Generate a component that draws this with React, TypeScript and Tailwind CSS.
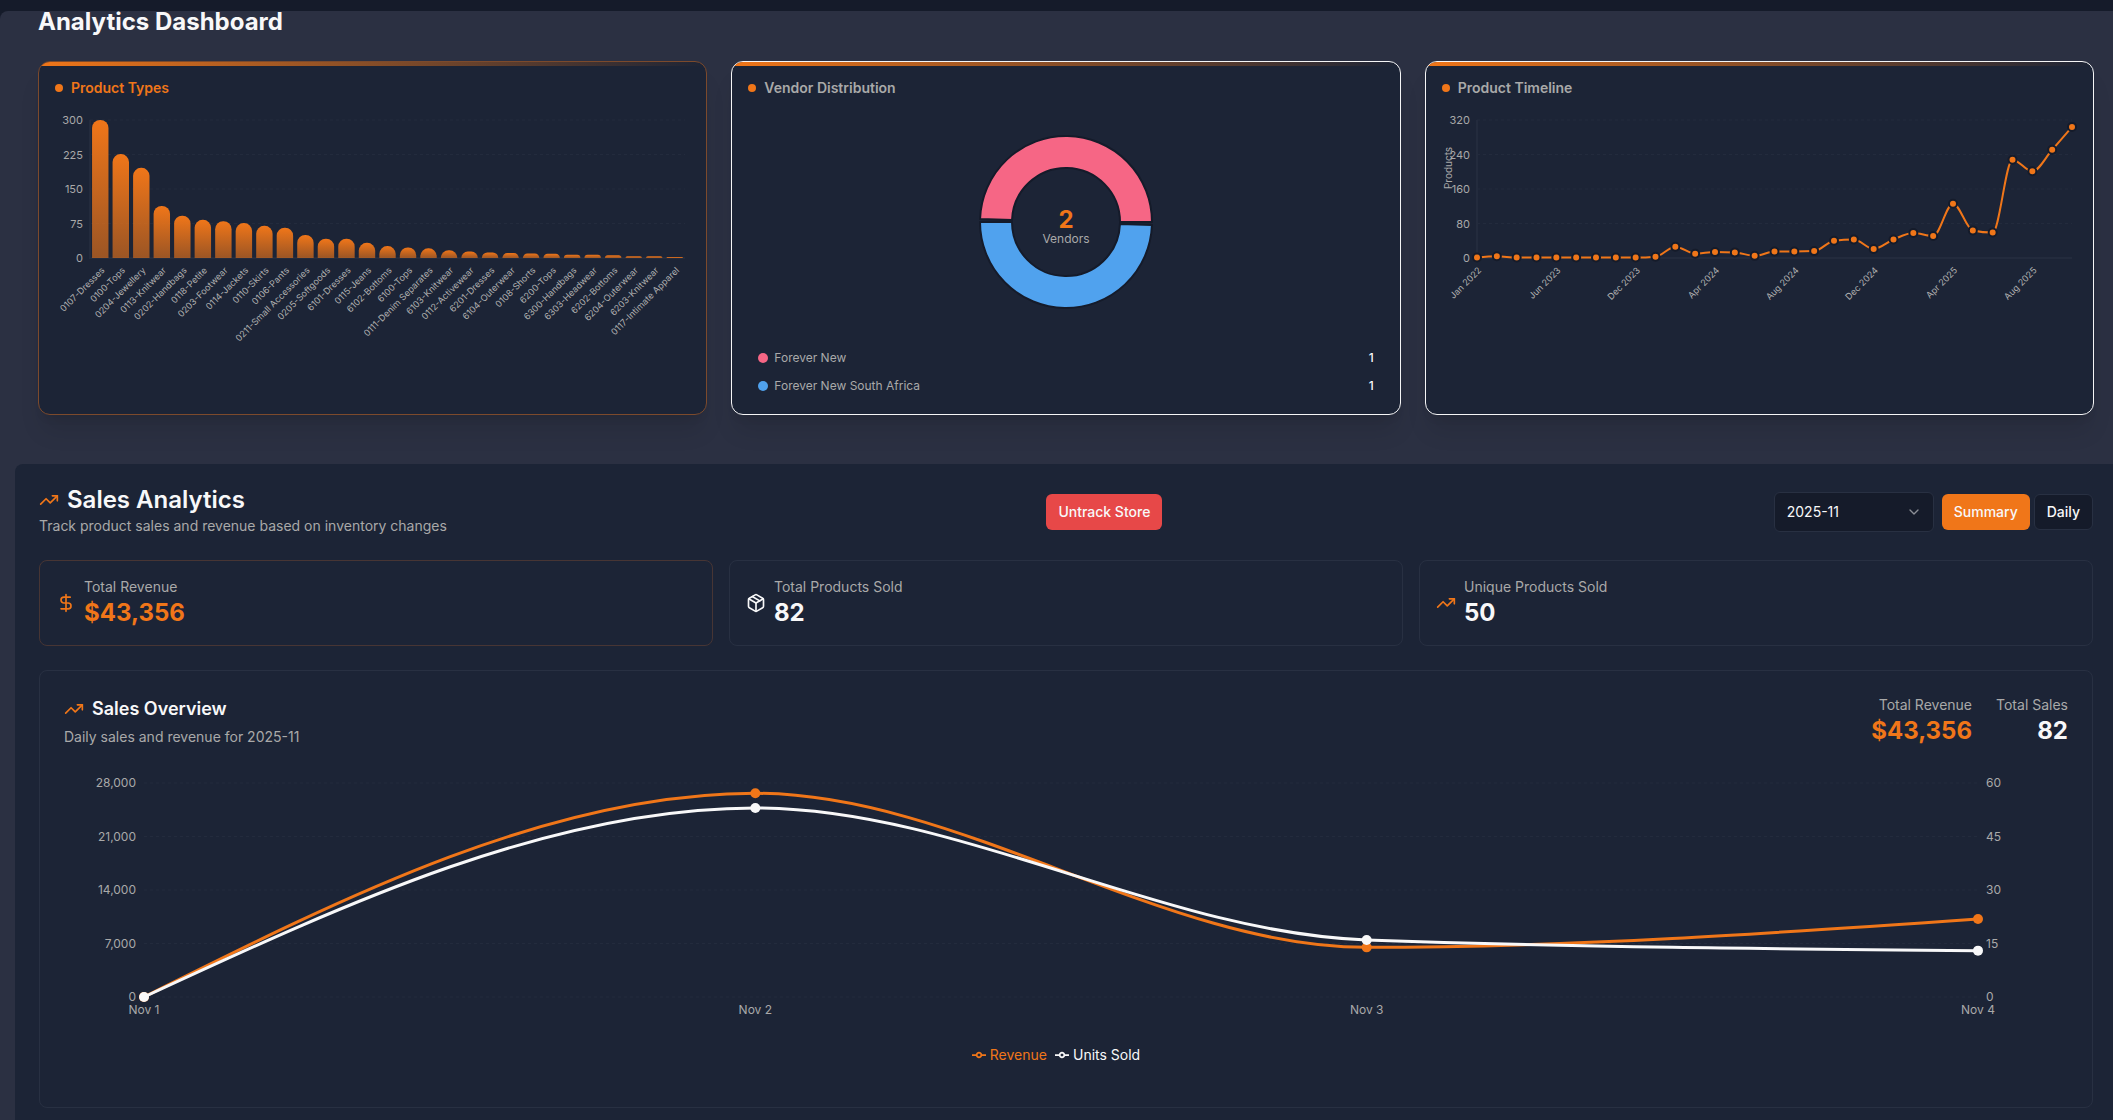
import { useLayoutEffect, useRef, useState } from "react";
import type { ReactNode } from "react";
import { ChevronDown, DollarSign, Package, TrendingUp } from "lucide-react";

type Point = { x: number; y: number };

const productTypes = [
  { name: "0107-Dresses", count: 300 },
  { name: "0100-Tops", count: 226 },
  { name: "0204-Jewellery", count: 196 },
  { name: "0113-Knitwear", count: 113 },
  { name: "0202-Handbags", count: 92 },
  { name: "0118-Petite", count: 83 },
  { name: "0203-Footwear", count: 80 },
  { name: "0114-Jackets", count: 76 },
  { name: "0110-Skirts", count: 70 },
  { name: "0106-Pants", count: 66 },
  { name: "0211-Small Accessories", count: 50 },
  { name: "0205-Softgoods", count: 42 },
  { name: "6101-Dresses", count: 42 },
  { name: "0115-Jeans", count: 33 },
  { name: "6102-Bottoms", count: 26 },
  { name: "6100-Tops", count: 23 },
  { name: "0111-Denim Separates", count: 21 },
  { name: "6103-Knitwear", count: 17 },
  { name: "0112-Activewear", count: 14 },
  { name: "6201-Dresses", count: 12 },
  { name: "6104-Outerwear", count: 11 },
  { name: "0108-Shorts", count: 10 },
  { name: "6200-Tops", count: 9 },
  { name: "6300-Handbags", count: 7 },
  { name: "6303-Headwear", count: 7 },
  { name: "6202-Bottoms", count: 6 },
  { name: "6204-Outerwear", count: 4 },
  { name: "6203-Knitwear", count: 4 },
  { name: "0117-Intimate Apparel", count: 2 },
];

const vendors = [
  { name: "Forever New", count: 1, dot: "bg-[#f66685]" },
  { name: "Forever New South Africa", count: 1, dot: "bg-[#50a2ee]" },
];

const timeline = [
  1, 4, 1, 1, 1, 1, 1, 1, 1, 3, 26, 10, 14, 13, 5, 15, 15, 16, 40, 43, 21, 43,
  58, 51, 126, 64, 59, 228, 201, 251, 304,
];

const timelineLabels = [
  "Jan 2022",
  "Jun 2023",
  "Dec 2023",
  "Apr 2024",
  "Aug 2024",
  "Dec 2024",
  "Apr 2025",
  "Aug 2025",
];

const dailySales = [
  { day: "Nov 1", revenue: 0, units: 0 },
  { day: "Nov 2", revenue: 26655, units: 53 },
  { day: "Nov 3", revenue: 6495, units: 16 },
  { day: "Nov 4", revenue: 10206, units: 13 },
];

const useWidth = () => {
  const ref = useRef<HTMLDivElement>(null);
  const [width, setWidth] = useState(0);

  useLayoutEffect(() => {
    const el = ref.current;
    if (!el) return;
    const measure = () => setWidth(el.clientWidth);
    measure();
    const observer = new ResizeObserver(measure);
    observer.observe(el);
    return () => observer.disconnect();
  }, []);

  return { ref, width };
};

// Monotone cubic interpolation, same maths as d3's curveMonotoneX
const monotonePath = (pts: Point[]) => {
  const n = pts.length;
  const slopes: number[] = [];
  for (let i = 0; i < n - 1; i++) {
    slopes.push((pts[i + 1].y - pts[i].y) / (pts[i + 1].x - pts[i].x));
  }
  const tangents: number[] = new Array(n).fill(0);
  for (let i = 1; i < n - 1; i++) {
    const a = slopes[i - 1];
    const b = slopes[i];
    tangents[i] =
      (Math.sign(a) + Math.sign(b)) *
      Math.min(Math.abs(a), Math.abs(b), 0.25 * Math.abs(a + b));
  }
  tangents[0] = (3 * slopes[0] - tangents[1]) / 2;
  tangents[n - 1] = (3 * slopes[n - 2] - tangents[n - 2]) / 2;

  let d = `M${pts[0].x},${pts[0].y}`;
  for (let i = 0; i < n - 1; i++) {
    const p = pts[i];
    const q = pts[i + 1];
    const dx = (q.x - p.x) / 3;
    d += `C${p.x + dx},${p.y + dx * tangents[i]},${q.x - dx},${q.y - dx * tangents[i + 1]},${q.x},${q.y}`;
  }
  return d;
};

const barPath = (x: number, y: number, w: number, h: number) => {
  const r = Math.min(8, w / 2, h);
  return `M${x},${y + h}V${y + r}A${r},${r},0,0,1,${x + r},${y}H${x + w - r}A${r},${r},0,0,1,${x + w},${y + r}V${y + h}Z`;
};

const slicePath = (cx: number, cy: number, from: number, to: number) => {
  const outer = 86;
  const inner = 54;
  const at = (r: number, deg: number) => {
    const rad = (deg * Math.PI) / 180;
    return `${cx + r * Math.cos(rad)},${cy - r * Math.sin(rad)}`;
  };
  return `M${at(outer, from)}A${outer},${outer},0,0,0,${at(outer, to)}L${at(inner, to)}A${inner},${inner},0,0,1,${at(inner, from)}Z`;
};

const plot = { left: 35, right: 5, top: 10, height: 138 };

const SmallGrid = ({ width, ticks }: { width: number; ticks: number[] }) => {
  const max = ticks[ticks.length - 1];
  return (
    <>
      {ticks.map((tick) => {
        const y = plot.top + plot.height * (1 - tick / max);
        return (
          <g key={tick}>
            <line
              x1={plot.left}
              x2={width - plot.right}
              y1={y}
              y2={y}
              stroke="#232b3d"
              strokeDasharray="3 3"
            />
            <text
              x={plot.left - 7}
              y={y + 4}
              textAnchor="end"
              className="fill-[#a9a9a9] text-[11px]"
            >
              {tick}
            </text>
          </g>
        );
      })}
      <path
        d={`M${plot.left},${plot.top}V${plot.top + plot.height}H${width - plot.right}`}
        fill="none"
        stroke="#232b3d"
        strokeWidth="2"
      />
    </>
  );
};

const SlantedLabel = ({ x, text }: { x: number; text: string }) => {
  const y = plot.top + plot.height + 8;
  return (
    <text
      x={x}
      y={y}
      dy="7"
      textAnchor="end"
      transform={`rotate(-45 ${x} ${y})`}
      className="fill-[#b0b0b0] text-[9px]"
    >
      {text}
    </text>
  );
};

const ProductTypesChart = () => {
  const { ref, width } = useWidth();
  const step = (width - plot.left - plot.right) / productTypes.length;
  const base = plot.top + plot.height;

  return (
    <div ref={ref} className="h-72">
      {width > 0 && (
        <svg width={width} height="288" className="block">
          <defs>
            <linearGradient id="barFill" x1="0" y1="0" x2="0" y2="1">
              <stop offset="0%" stopColor="#f07619" />
              <stop offset="100%" stopColor="#f07619" stopOpacity="0.6" />
            </linearGradient>
          </defs>
          <SmallGrid width={width} ticks={[0, 75, 150, 225, 300]} />
          {productTypes.map((item, i) => {
            const h = (item.count / 300) * plot.height;
            const x = plot.left + i * step;
            return (
              <g key={item.name}>
                <path
                  d={barPath(x + step * 0.1, base - h, step * 0.8, h)}
                  fill="url(#barFill)"
                />
                <SlantedLabel x={x + step / 2} text={item.name} />
              </g>
            );
          })}
        </svg>
      )}
    </div>
  );
};

const VendorChart = () => (
  <>
    <div className="flex h-56 justify-center">
      <svg width="200" height="224">
        <path
          d={slicePath(100, 112, 0, 178)}
          fill="#f66685"
          stroke="#151b2a"
          strokeWidth="2"
        />
        <path
          d={slicePath(100, 112, 180, 358)}
          fill="#50a2ee"
          stroke="#151b2a"
          strokeWidth="2"
        />
        <text
          x="100"
          y="118"
          textAnchor="middle"
          className="fill-[#f07619] text-2xl font-bold"
        >
          2
        </text>
        <text
          x="100"
          y="133"
          textAnchor="middle"
          className="fill-[#a9a9a9] text-xs"
        >
          Vendors
        </text>
      </svg>
    </div>
    <ul className="mt-4 flex flex-col gap-3 px-2.5">
      {vendors.map((vendor) => (
        <li key={vendor.name} className="flex items-center gap-1.5 text-xs">
          <span className={`size-2.5 rounded-full ${vendor.dot}`} />
          <span className="text-[#a9a9a9]">{vendor.name}</span>
          <span className="ml-auto font-medium">{vendor.count}</span>
        </li>
      ))}
    </ul>
  </>
);

const TimelineChart = () => {
  const { ref, width } = useWidth();
  const step = (width - plot.left - plot.right) / (timeline.length - 1);
  const points = timeline.map((value, i) => ({
    x: plot.left + i * step,
    y: plot.top + plot.height * (1 - value / 320),
  }));

  return (
    <div ref={ref} className="h-72">
      {width > 0 && (
        <svg width={width} height="288" className="block">
          <SmallGrid width={width} ticks={[0, 80, 160, 240, 320]} />
          <text
            x="10"
            y="58"
            textAnchor="middle"
            transform="rotate(-90 10 58)"
            className="fill-[#a9a9a9] text-[10px]"
          >
            Products
          </text>
          <path
            d={monotonePath(points)}
            fill="none"
            stroke="#f07619"
            strokeWidth="2"
          />
          {points.map((p, i) => (
            <circle
              key={i}
              cx={p.x}
              cy={p.y}
              r="4"
              fill="#f07619"
              stroke="#151b2a"
              strokeWidth="2"
            />
          ))}
          {timelineLabels.map((label, i) => (
            <SlantedLabel key={label} x={points[i * 4].x} text={label} />
          ))}
        </svg>
      )}
    </div>
  );
};

const ChartCard = (props: {
  title: string;
  highlighted?: boolean;
  children: ReactNode;
}) => {
  const { title, highlighted, children } = props;

  return (
    <section
      className={`relative overflow-hidden rounded-xl border bg-[#1c2436] p-4 shadow-xl ${
        highlighted ? "border-[#7c4a2c]" : "border-[#f5f5f6]"
      }`}
    >
      <div className="absolute inset-x-0 top-0 h-1 bg-linear-to-r from-[#f07619] to-transparent" />
      <h2
        className={`mb-3 flex items-center gap-2 text-sm font-semibold ${
          highlighted ? "text-[#f07619]" : "text-[#a9a9a9]"
        }`}
      >
        <span className="size-2 rounded-full bg-[#f07619]" />
        {title}
      </h2>
      {children}
    </section>
  );
};

const StatCard = (props: {
  icon: ReactNode;
  label: string;
  value: string;
  highlighted?: boolean;
}) => {
  const { icon, label, value, highlighted } = props;

  return (
    <div
      className={`flex items-center gap-2 rounded-lg border p-4 ${
        highlighted ? "border-[#473534]" : "border-[#283042]"
      }`}
    >
      {icon}
      <div>
        <p className="text-sm text-[#a9a9a9]">{label}</p>
        <p
          className={`text-2xl font-bold ${highlighted ? "text-[#f07619]" : ""}`}
        >
          {value}
        </p>
      </div>
    </div>
  );
};

const SalesChart = () => {
  const { ref, width } = useWidth();
  const left = 80;
  const right = width - 90;
  const top = 20;
  const height = 214;
  const xAt = (i: number) =>
    left + ((right - left) * i) / (dailySales.length - 1);
  const revenue = dailySales.map((d, i) => ({
    x: xAt(i),
    y: top + height * (1 - d.revenue / 28000),
  }));
  const units = dailySales.map((d, i) => ({
    x: xAt(i),
    y: top + height * (1 - d.units / 60),
  }));

  return (
    <div ref={ref} className="mt-4 h-66">
      {width > 0 && (
        <svg width={width} height="264" className="block">
          {[0, 1, 2, 3, 4].map((i) => {
            const y = top + height * (1 - i / 4);
            return (
              <g key={i} className="fill-[#a9a9a9] text-xs">
                <line
                  x1={left}
                  x2={right}
                  y1={y}
                  y2={y}
                  stroke="#232b3d"
                  strokeDasharray="3 3"
                />
                <text x={left - 8} y={y + 4} textAnchor="end">
                  {(i * 7000).toLocaleString("en-US")}
                </text>
                <text x={right + 8} y={y + 4}>
                  {i * 15}
                </text>
              </g>
            );
          })}
          {dailySales.map((d, i) => (
            <text
              key={d.day}
              x={xAt(i)}
              y="251"
              textAnchor="middle"
              className="fill-[#a9a9a9] text-xs"
            >
              {d.day}
            </text>
          ))}
          <path
            d={monotonePath(revenue)}
            fill="none"
            stroke="#f07619"
            strokeWidth="3"
          />
          {revenue.map((p) => (
            <circle key={p.x} cx={p.x} cy={p.y} r="5" fill="#f07619" />
          ))}
          <path
            d={monotonePath(units)}
            fill="none"
            stroke="#f8f8f9"
            strokeWidth="3"
          />
          {units.map((p) => (
            <circle key={p.x} cx={p.x} cy={p.y} r="5" fill="#f8f8f9" />
          ))}
        </svg>
      )}
    </div>
  );
};

const LegendItem = ({ color, label }: { color: string; label: string }) => (
  <li className={`flex items-center gap-1 text-sm ${color}`}>
    <svg
      width="14"
      height="14"
      viewBox="0 0 32 32"
      fill="none"
      stroke="currentColor"
      strokeWidth="4"
    >
      <path d="M0,16h10.67a5.33,5.33,0,1,1,10.66,0H32M21.33,16a5.33,5.33,0,1,1,-10.66,0" />
    </svg>
    {label}
  </li>
);

const App = () => {
  const [month, setMonth] = useState("2025-11");

  return (
    <div className="flex min-h-screen flex-col bg-[#151b2a] pt-[11px] font-['Inter',sans-serif] text-[#f8f8f9]">
      <main className="flex flex-1 flex-col rounded-tl-lg bg-[#2b3042] pl-[15px]">
        <div className="pr-[19px] pl-[23px]">
          <h1 className="mb-7 text-2xl leading-[22px] font-bold">
            Analytics Dashboard
          </h1>
          <div className="mb-[49px] grid grid-cols-3 gap-6">
            <ChartCard title="Product Types" highlighted>
              <ProductTypesChart />
            </ChartCard>
            <ChartCard title="Vendor Distribution">
              <VendorChart />
            </ChartCard>
            <ChartCard title="Product Timeline">
              <TimelineChart />
            </ChartCard>
          </div>
        </div>

        <div className="flex-1 rounded-tl-lg bg-[#1c2436] pt-6 pr-5 pb-3 pl-6">
          <header className="mb-6 flex items-center justify-between">
            <div className="w-99 whitespace-nowrap">
              <h2 className="mb-1 flex items-center gap-2 text-2xl leading-6 font-semibold">
                <TrendingUp className="size-5 text-[#f07619]" />
                Sales Analytics
              </h2>
              <p className="text-sm text-[#a9a9a9]">
                Track product sales and revenue based on inventory changes
              </p>
            </div>
            <button
              type="button"
              className="h-9 rounded-md bg-[#e74848] px-3 text-sm font-medium"
            >
              Untrack Store
            </button>
            <div className="flex items-center gap-2">
              <div className="relative">
                <select
                  aria-label="Month"
                  value={month}
                  onChange={(e) => setMonth(e.target.value)}
                  className="h-10 w-40 appearance-none rounded-md border border-[#283042] bg-[#151b2a] px-3 text-sm"
                >
                  <option value="2025-11">2025-11</option>
                </select>
                <ChevronDown className="pointer-events-none absolute top-3 right-3 size-4 text-[#8b8e96]" />
              </div>
              <div className="flex gap-1">
                <button
                  type="button"
                  className="h-9 rounded-md bg-[#f07619] px-3 text-sm font-medium"
                >
                  Summary
                </button>
                <button
                  type="button"
                  className="h-9 rounded-md border border-[#283042] bg-[#151b2a] px-3 text-sm font-medium"
                >
                  Daily
                </button>
              </div>
            </div>
          </header>

          <div className="mb-6 grid grid-cols-3 gap-4">
            <StatCard
              icon={<DollarSign className="size-5 text-[#f07619]" />}
              label="Total Revenue"
              value="$43,356"
              highlighted
            />
            <StatCard
              icon={<Package className="size-5" />}
              label="Total Products Sold"
              value="82"
            />
            <StatCard
              icon={<TrendingUp className="size-5 text-[#f07619]" />}
              label="Unique Products Sold"
              value="50"
            />
          </div>

          <section className="rounded-lg border border-[#283042] px-6 pt-6 pb-10">
            <div className="flex justify-between">
              <div>
                <h3 className="mb-1 flex items-center gap-2 text-lg font-semibold">
                  <TrendingUp className="size-5 text-[#f07619]" />
                  Sales Overview
                </h3>
                <p className="text-sm text-[#a9a9a9]">
                  Daily sales and revenue for {month}
                </p>
              </div>
              <div className="flex gap-6 text-right">
                <div>
                  <p className="text-sm text-[#a9a9a9]">Total Revenue</p>
                  <p className="text-2xl font-bold text-[#f07619]">$43,356</p>
                </div>
                <div>
                  <p className="text-sm text-[#a9a9a9]">Total Sales</p>
                  <p className="text-2xl font-bold">82</p>
                </div>
              </div>
            </div>
            <SalesChart />
            <ul className="mt-4 flex h-6 items-center justify-center gap-2 pr-5">
              <LegendItem color="text-[#f07619]" label="Revenue" />
              <LegendItem color="text-[#f8f8f9]" label="Units Sold" />
            </ul>
          </section>
        </div>
      </main>
    </div>
  );
};

export default App;
